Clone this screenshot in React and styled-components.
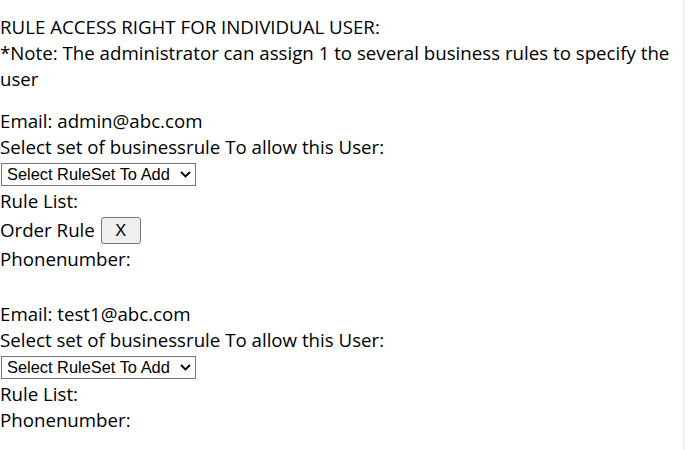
import React from "react";
import styled, { createGlobalStyle } from "styled-components";

const GlobalStyle = createGlobalStyle`
  html {
    background: #f0f0f0;
  }
  body {
    margin: 0 2px 0 0;
    background: #fff;
    min-height: 450px;
    font-family: "Open Sans", "Noto Sans", sans-serif;
    color: #000;
  }
`;

const Page = styled.div`
  padding-top: 14px;
  font-size: 18.7px;
  line-height: 26px;
`;

const Intro = styled.div`
  margin-bottom: 16px;
`;

const UserBlock = styled.div`
  margin-bottom: 29px;
`;

const Line = styled.div`
  height: ${(p) => p.$h || 26}px;
  display: flex;
  align-items: center;
  white-space: nowrap;
`;

const SelectWrap = styled.div`
  position: relative;
  display: inline-flex;
  margin-left: 1px;
`;

const RuleSelect = styled.select`
  appearance: none;
  font-family: "Liberation Sans", Arial, sans-serif;
  font-size: 16.4px;
  width: 195px;
  height: 23px;
  padding: 0 0 0 5px;
  border: 1px solid #767676;
  border-radius: 0;
  background: #fff;
  color: #000;
`;

const Chevron = styled.svg`
  position: absolute;
  right: 5px;
  top: 8px;
  pointer-events: none;
`;

const RemoveButton = styled.button`
  font-family: "Liberation Sans", Arial, sans-serif;
  font-size: 16.4px;
  width: 40px;
  height: 27px;
  margin-left: 6px;
  border: 1px solid #767676;
  border-radius: 3px;
  background: #efefef;
  color: #000;
`;

const users = [
  { email: "admin@abc.com", rules: ["Order Rule"] },
  { email: "test1@abc.com", rules: [] },
];

const App = () => {
  return (
    <Page>
      <GlobalStyle />
      <Intro>
        RULE ACCESS RIGHT FOR INDIVIDUAL USER:
        <br />
        *Note: The administrator can assign 1 to several business rules to specify the user
      </Intro>
      {users.map((u) => (
        <UserBlock key={u.email}>
          <Line>Email: {u.email}</Line>
          <Line>Select set of businessrule To allow this User:</Line>
          <Line $h={28}>
            <SelectWrap>
              <RuleSelect defaultValue="">
                <option value="">Select RuleSet To Add</option>
                <option value="order">Order Rule</option>
              </RuleSelect>
              <Chevron width="11" height="7" viewBox="0 0 11 7">
                <path d="M1 1 L5.5 5.5 L10 1" fill="none" stroke="#000" strokeWidth="1.8" />
              </Chevron>
            </SelectWrap>
          </Line>
          <Line>Rule List:</Line>
          {u.rules.map((r) => (
            <Line key={r} $h={32}>
              {r}
              <RemoveButton>X</RemoveButton>
            </Line>
          ))}
          <Line>Phonenumber:</Line>
        </UserBlock>
      ))}
    </Page>
  );
};

export default App;
